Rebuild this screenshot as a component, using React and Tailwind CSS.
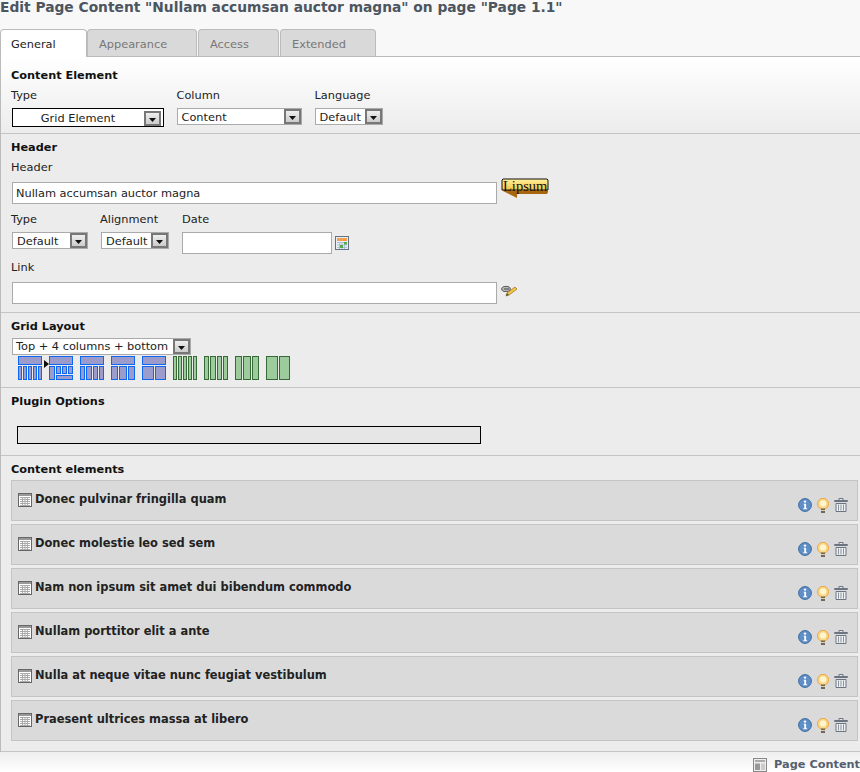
import React from "react";

const items = [
  "Donec pulvinar fringilla quam",
  "Donec molestie leo sed sem",
  "Nam non ipsum sit amet dui bibendum commodo",
  "Nullam porttitor elit a ante",
  "Nulla at neque vitae nunc feugiat vestibulum",
  "Praesent ultrices massa at libero",
];

function Select({ value, className, center, dark, tight }) {
  return (
    <div className={"flex items-stretch bg-white " + (dark ? "border-[1.5px] border-black h-[19px] p-px " : "border border-[#aaa] h-[17px] ") + className}>
      <div className={"flex-1 whitespace-nowrap overflow-hidden " + (tight ? "leading-[15px] pl-[3px] " : "leading-[16px] pl-1 ") + (center ? "text-center pr-[6px]" : "")}>{value}</div>
      <div className={"w-[17px] h-[15px] shrink-0 border-2 border-[#777] bg-gradient-to-b from-[#eee] to-[#ccc] flex items-end justify-center pb-px " + (dark ? "mr-px mt-px" : "")}>
        <svg width="9" height="5" viewBox="0 0 9 5"><path d="M1 0h7L4.5 4z" fill="#111" /></svg>
      </div>
    </div>
  );
}

function Label({ children, className }) {
  return <div className={"leading-[14px] " + (className || "")}>{children}</div>;
}

function Heading({ children, className }) {
  return <div className={"font-bold text-[11.3px] leading-[16px] text-[#111] " + (className || "")}>{children}</div>;
}

function TextInput({ value, className }) {
  return (
    <div className={"h-[22px] border border-[#aaa] bg-white pl-[3px] leading-[20px] " + className}>{value}</div>
  );
}

// column outer edges, with a 1px gap between the columns
function edges(n, from, to) {
  const out = [];
  const w = (to - from - (n - 1)) / n;
  for (let i = 0; i < n; i++) {
    const a = from + i * (w + 1);
    out.push([Math.round(a), Math.round(a + w)]);
  }
  return out;
}

function box(key, x0, y0, x1, y1) {
  return <rect key={key} x={x0 + 0.5} y={y0 + 0.5} width={x1 - x0 - 1} height={y1 - y0 - 1} />;
}

function Wizard({ color, fill, top, cols, nested }) {
  const shapes = [];
  if (top) shapes.push(box("top", 0, 0, 24, 9));
  const y = top ? 10 : 0;
  if (nested) {
    shapes.push(box("left", 0, y, 6, 24));
    edges(3, 7, 24).forEach((c, i) => shapes.push(box("m" + i, c[0], y, c[1], 18)));
    shapes.push(box("bottom", 7, 19, 24, 24));
  } else {
    edges(cols, 0, 24).forEach((c, i) => shapes.push(box("c" + i, c[0], y, c[1], 24)));
  }
  return (
    <svg width="24" height="24" viewBox="0 0 24 24" fill={fill} stroke={color} strokeWidth="1">{shapes}</svg>
  );
}

function InfoIcon() {
  return (
    <svg width="14" height="14" viewBox="0 0 14 14">
      <circle cx="7" cy="7" r="6.4" fill="#5f8fc6" stroke="#3a6aa3" />
      <circle cx="7" cy="3.6" r="1.2" fill="#fff" />
      <path d="M5.7 5.8h2.4v4.4h1v1H5.3v-1h1V6.8h-.6z" fill="#fff" />
    </svg>
  );
}

function BulbIcon() {
  return (
    <svg width="14" height="15" viewBox="0 0 14 15">
      <circle cx="7" cy="5.8" r="5.5" fill="#fcd98a" stroke="#e8a53c" />
      <circle cx="7" cy="5.4" r="3" fill="#fff6cf" />
      <rect x="5" y="10.5" width="4" height="4.5" fill="#6e6a58" />
      <rect x="5" y="12" width="4" height="1" fill="#d4cfb8" />
    </svg>
  );
}

function TrashIcon() {
  return (
    <svg width="14" height="14" viewBox="0 0 14 14" fill="none" stroke="#6b7480">
      <path d="M.5 3.5h13v-1h-13zM5 2V.5h4V2" fill="#e8eaed" />
      <path d="M2 5.5h10v8H2z" fill="#eef0f2" />
      <path d="M4.5 6.5v6M7 6.5v6M9.5 6.5v6" stroke="#8a929c" />
    </svg>
  );
}

function PageIcon() {
  return (
    <svg width="14" height="14" viewBox="0 0 14 14">
      <rect x="0.5" y="0.5" width="13" height="13" fill="#fff" stroke="#666" />
      <rect x="1" y="1" width="12" height="2" fill="#999" />
      <path d="M2 4.5h10M2 6.5h10M2 8.5h10M2 10.5h10M2 12.5h10M4.5 4v9M7 4v9M9.5 4v9" stroke="#aaa" />
    </svg>
  );
}

function Item({ title }) {
  return (
    <div className="h-[41px] border border-[#c4c4c4] bg-[#dadada] flex justify-between pl-[6px] pr-[9px]">
      <div className="flex items-start pt-[12px] gap-[3px]">
        <PageIcon />
        <div className="font-bold text-[11.45px] text-[#222] leading-[12px]">{title}</div>
      </div>
      <div className="flex items-start pt-[17px] gap-[4px]">
        <InfoIcon />
        <BulbIcon />
        <TrashIcon />
      </div>
    </div>
  );
}

function Tab({ label, active, className }) {
  if (active) {
    return (
      <div className={"h-[28px] -mb-px z-10 bg-white border border-b-0 border-[#bbb] rounded-t-[4px] pl-[10px] pt-[7px] leading-[14px] text-[#222] " + className}>{label}</div>
    );
  }
  return (
    <div className={"h-[27px] bg-[#d9d9d9] border border-b-0 border-[#bbb] rounded-t-[4px] pl-[11px] pt-[7px] leading-[14px] text-[#777] " + className}>{label}</div>
  );
}

function LipsumBadge() {
  return (
    <div className="relative ml-[4px] -mt-[1px] w-[48px] h-[20px]">
      <svg width="48" height="20" viewBox="0 0 48 20" className="absolute left-0 top-0">
        <defs>
          <linearGradient id="lipsumFill" x1="0" y1="0" x2="0" y2="1">
            <stop offset="0" stopColor="#fff09a" />
            <stop offset="1" stopColor="#f6c548" />
          </linearGradient>
        </defs>
        <path d="M1 12V2l1-1h44l1 1v10z" fill="url(#lipsumFill)" stroke="#111" />
        <path d="M1 12h46v2l-1 2H16v4L2 13z" fill="#a8670f" />
      </svg>
      <div className="absolute left-[2px] top-[0px] font-['Liberation_Serif',serif] text-[14.5px] leading-[16px] text-[#111]">Lipsum</div>
    </div>
  );
}

export default function App() {
  return (
    <div className="w-[860px] h-[772px] overflow-hidden bg-[#f8f8f8] font-['DejaVu_Sans',sans-serif] text-[11.35px] text-[#222]">
      <div className="h-[29px]">
        <div className="font-bold text-[13.8px] leading-[14px] text-[#4c5560] whitespace-nowrap">Edit Page Content "Nullam accumsan auctor magna" on page "Page 1.1"</div>
      </div>
      <div className="flex items-end h-[27px] relative">
        <Tab label="General" active className="w-[87px]" />
        <Tab label="Appearance" className="w-[110px]" />
        <Tab label="Access" className="w-[81px] ml-px" />
        <Tab label="Extended" className="w-[96px] ml-px" />
      </div>
      <div className="border-t border-[#bbb] border-l-[1px] border-l-[#bbb]">
        <section className="h-[77px] pl-[10px] pt-[11px] bg-gradient-to-b from-white to-[#ececec] border-b border-[#c4c4c4]">
          <Heading>Content Element</Heading>
          <div className="flex mt-[4px]">
            <div className="w-[165.5px]">
              <Label>Type</Label>
              <Select value="Grid Element" center dark className="w-[152px] mt-[6px] ml-px" />
            </div>
            <div className="w-[138px]">
              <Label>Column</Label>
              <Select value="Content" className="w-[125px] mt-[6px]" />
            </div>
            <div>
              <Label>Language</Label>
              <Select value="Default" className="w-[68px] mt-[6px]" />
            </div>
          </div>
        </section>
        <section className="h-[179px] pl-[10px] pt-[6px] bg-[#ececec] border-b border-[#c4c4c4]">
          <Heading>Header</Heading>
          <Label className="mt-[4px]">Header</Label>
          <div className="flex items-start mt-[7px] ml-px">
            <TextInput value="Nullam accumsan auctor magna" className="w-[485px] mt-px" />
            <div className="-mt-[2px]">
              <LipsumBadge />
            </div>
          </div>
          <div className="flex mt-[8px]">
            <div className="w-[89px]">
              <Label>Type</Label>
              <Select value="Default" className="w-[76px] mt-[6px] ml-px" />
            </div>
            <div className="w-[82px]">
              <Label>Alignment</Label>
              <Select value="Default" className="w-[68px] mt-[6px] ml-px" />
            </div>
            <div>
              <Label>Date</Label>
              <div className="flex items-start mt-[6px]">
                <TextInput value="" className="w-[150px]" />
                <svg width="14" height="14" viewBox="0 0 14 14" className="ml-[3px] mt-[4px]">
                  <rect x="0.5" y="0.5" width="13" height="13" fill="#e8eef6" stroke="#66717f" />
                  <rect x="2" y="2" width="10" height="3" fill="#f59e4b" />
                  <path d="M2 6.5h10M2 9h10M2 11.5h10M4.5 6v7M7 6v7M9.5 6v7" stroke="#a9c0dd" />
                  <rect x="5" y="9" width="3" height="3" fill="#5aa84a" />
                  <rect x="9" y="6" width="3" height="2.5" fill="#5aa84a" />
                </svg>
              </div>
            </div>
          </div>
          <Label className="mt-[6px]">Link</Label>
          <div className="flex items-start mt-[8px] ml-px">
            <TextInput value="" className="w-[485px]" />
            <svg width="17" height="14" viewBox="0 0 17 14" className="ml-[4px] mt-[3px]">
              <ellipse cx="5" cy="4" rx="4.3" ry="2.6" fill="#bbb" stroke="#555" />
              <path d="M3 4h5" stroke="#444" />
              <path d="M5 11l1-3 8-6 2 2-8 6z" fill="#f2c54b" stroke="#a8781c" strokeWidth="0.8" />
              <path d="M5 11l1-3 2 2z" fill="#555" />
            </svg>
          </div>
        </section>
        <section className="h-[75px] pl-[10px] pt-[6px] bg-[#ececec] border-b border-[#c4c4c4]">
          <Heading>Grid Layout</Heading>
          <Select value="Top + 4 columns + bottom" tight className="w-[179px] mt-[3px] ml-px" />
          <div className="relative flex gap-[7px] ml-[7px] mt-px">
            <Wizard color="#0f66f0" fill="#9c9ccc" top cols={5} />
            <Wizard color="#0f66f0" fill="#9c9ccc" top nested />
            <Wizard color="#0f66f0" fill="#9c9ccc" top cols={4} />
            <Wizard color="#0f66f0" fill="#9c9ccc" top cols={3} />
            <Wizard color="#0f66f0" fill="#9c9ccc" top cols={2} />
            <Wizard color="#386a38" fill="#9ccc9c" cols={5} />
            <Wizard color="#386a38" fill="#9ccc9c" cols={4} />
            <Wizard color="#386a38" fill="#9ccc9c" cols={3} />
            <Wizard color="#386a38" fill="#9ccc9c" cols={2} />
            <svg width="5" height="8" viewBox="0 0 5 8" className="absolute left-[26px] top-[4px]"><path d="M0 0l5 4-5 4z" fill="#111" /></svg>
          </div>
        </section>
        <section className="h-[68px] pl-[10px] pt-[6px] bg-[#ececec] border-b border-[#c4c4c4]">
          <Heading>Plugin Options</Heading>
          <div className="w-[464px] h-[18px] ml-[6px] mt-[16px] border border-black bg-[#e6e6e6]" />
        </section>
        <section className="h-[296px] pl-[10px] pr-[2px] pt-[6px] bg-[#ececec] border-b border-[#c4c4c4]">
          <Heading>Content elements</Heading>
          <div className="flex flex-col gap-[3px] mt-[2px]">
            {items.map((t) => (
              <Item key={t} title={t} />
            ))}
          </div>
        </section>
      </div>
      <div className="h-[20px] flex justify-end items-start pt-[6px] bg-gradient-to-b from-[#eee] to-white">
        <svg width="14" height="14" viewBox="0 0 14 14" className="mr-[7px]">
          <rect x="0.5" y="0.5" width="13" height="13" fill="#eee" stroke="#888" />
          <rect x="2" y="2" width="10" height="2" fill="#aaa" />
          <rect x="2" y="5.5" width="5" height="6.5" fill="#999" />
          <rect x="8" y="5.5" width="4" height="6.5" fill="#ccc" />
        </svg>
        <div className="font-bold text-[11.3px] leading-[14px] text-[#555f70] whitespace-nowrap">Page Content</div>
      </div>
    </div>
  );
}
